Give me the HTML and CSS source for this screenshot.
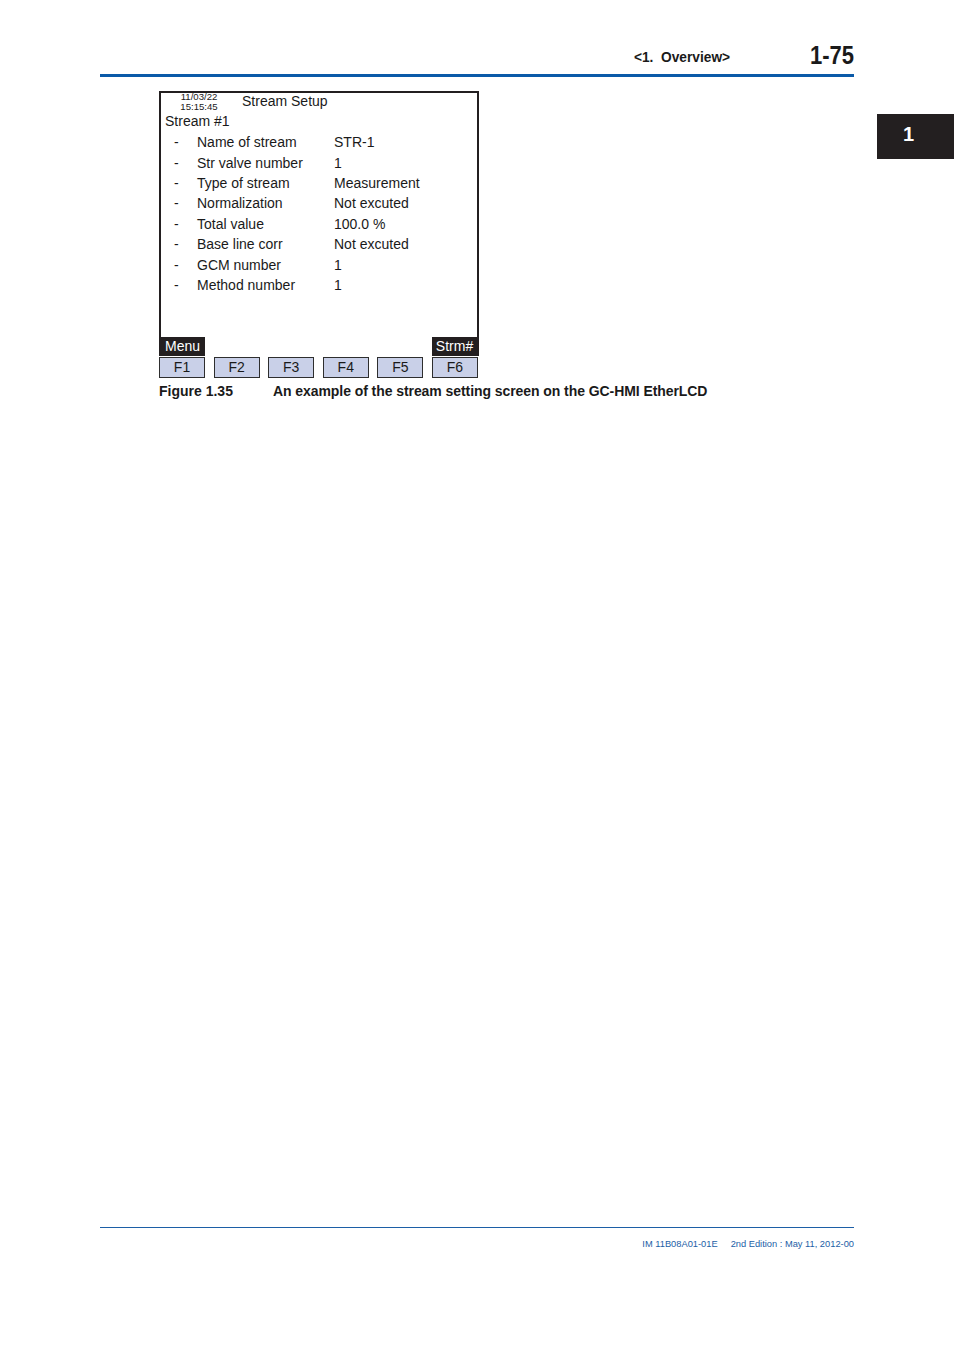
FILE: index.html
```html
<!DOCTYPE html>
<html>
<head>
<meta charset="utf-8">
<link rel="stylesheet" href="styles.css">
</head>
<body>
<div class="page">
  <header class="header">
    <div class="header-row">
      <span class="chapter">&lt;1.&nbsp; Overview&gt;</span>
      <span class="pageno">1-75</span>
    </div>
    <div class="rule"></div>
  </header>

  <div class="body-row">
    <div class="figure">
      <div class="lcd">
        <div class="lcd-body">
          <div class="lcd-top">
            <div class="date"><div>11/03/22</div><div>15:15:45</div></div>
            <div class="title">Stream Setup</div>
          </div>
          <div class="stream">Stream #1</div>
          <div class="rows">
            <span class="d">-</span><span>Name of stream</span><span>STR-1</span>
            <span class="d">-</span><span>Str valve number</span><span>1</span>
            <span class="d">-</span><span>Type of stream</span><span>Measurement</span>
            <span class="d">-</span><span>Normalization</span><span>Not excuted</span>
            <span class="d">-</span><span>Total value</span><span>100.0 %</span>
            <span class="d">-</span><span>Base line corr</span><span>Not excuted</span>
            <span class="d">-</span><span>GCM number</span><span>1</span>
            <span class="d">-</span><span>Method number</span><span>1</span>
          </div>
        </div>
        <div class="lcd-bar">
          <span class="soft">Menu</span>
          <span class="soft">Strm#</span>
        </div>
      </div>
      <div class="keys">
        <span class="key">F1</span>
        <span class="key">F2</span>
        <span class="key">F3</span>
        <span class="key">F4</span>
        <span class="key">F5</span>
        <span class="key">F6</span>
      </div>
      <div class="caption">
        <span class="fig-no">Figure 1.35</span>
        <span class="fig-text">An example of the stream setting screen on the GC-HMI EtherLCD</span>
      </div>
    </div>
    <div class="tab">1</div>
  </div>

  <footer class="footer">
    <div class="foot-rule"></div>
    <div class="foot-text">
      <span>IM 11B08A01-01E</span>
      <span>2nd Edition : May 11, 2012-00</span>
    </div>
  </footer>
</div>
</body>
</html>
```

FILE: styles.css
```css
html, body {
  margin: 0;
  padding: 0;
  background: #ffffff;
}

.page {
  width: 954px;
  height: 1350px;
  display: flex;
  flex-direction: column;
  font-family: "Liberation Sans", Arial, sans-serif;
  color: #1a1a1a;
}

.header {
  margin-left: 100px;
  width: 754px;
  padding-top: 43px;
}

.header-row {
  display: flex;
  justify-content: flex-end;
  align-items: flex-start;
  height: 30px;
}

.chapter {
  display: inline-block;
  font-weight: bold;
  font-size: 14px;
  line-height: 16px;
  margin-top: 6px;
  margin-right: 74px;
  transform: scaleX(0.98);
  transform-origin: right center;
}

.pageno {
  display: inline-block;
  font-weight: bold;
  font-size: 25px;
  line-height: 25px;
  transform: scaleX(0.88);
  transform-origin: right center;
}

.rule {
  height: 3px;
  background: #0a5aa8;
  margin-top: 1px;
}

.body-row {
  display: flex;
  justify-content: space-between;
  align-items: flex-start;
  margin-top: 14px;
}

.figure {
  margin-left: 159px;
  width: 560px;
}

.lcd {
  width: 316px;
  border: 2px solid #231f20;
  border-bottom: none;
}

.lcd-body {
  height: 244px;
}

.lcd-top {
  display: flex;
  align-items: flex-start;
  height: 18px;
}

.date {
  font-size: 9.6px;
  line-height: 10px;
  width: 56px;
  text-align: center;
  padding-left: 10px;
  margin-top: -1px;
}

.title {
  font-size: 14px;
  line-height: 16px;
  margin-left: 15px;
}

.stream {
  font-size: 14px;
  line-height: 20px;
  padding-left: 4px;
}

.rows {
  display: grid;
  grid-template-columns: 24px 137px auto;
  grid-auto-rows: 20.4px;
  align-items: center;
  font-size: 14px;
  padding-left: 12px;
  margin-top: 1px;
}

.rows .d {
  padding-left: 1px;
}

.lcd-bar {
  display: flex;
  justify-content: space-between;
  height: 19px;
  margin-left: -1px;
}

.soft {
  background: #231f20;
  color: #ffffff;
  font-size: 14px;
  line-height: 19px;
  width: 45px;
  text-align: center;
}

.keys {
  width: 319px;
  display: flex;
  justify-content: space-between;
  margin-top: 1px;
}

.key {
  width: 44px;
  height: 19px;
  border: 1px solid #2e2e2e;
  background: #c9d0e8;
  font-size: 14px;
  line-height: 19px;
  text-align: center;
}

.caption {
  display: flex;
  font-weight: bold;
  font-size: 14px;
  line-height: 18px;
  margin-top: 4px;
}

.fig-no {
  width: 114px;
}

.fig-text {
  letter-spacing: -0.07px;
}

.tab {
  margin-top: 23px;
  width: 63px;
  padding-right: 14px;
  height: 45px;
  background: #231f20;
  color: #ffffff;
  font-weight: bold;
  font-size: 20px;
  line-height: 40px;
  text-align: center;
}

.footer {
  margin-top: auto;
  margin-left: 100px;
  width: 754px;
  padding-bottom: 100px;
}

.foot-rule {
  height: 1px;
  background: #1c5ea6;
}

.foot-text {
  display: flex;
  justify-content: flex-end;
  gap: 13px;
  font-size: 9.3px;
  line-height: 12px;
  color: #1c5ea6;
  margin-top: 10px;
}
```
